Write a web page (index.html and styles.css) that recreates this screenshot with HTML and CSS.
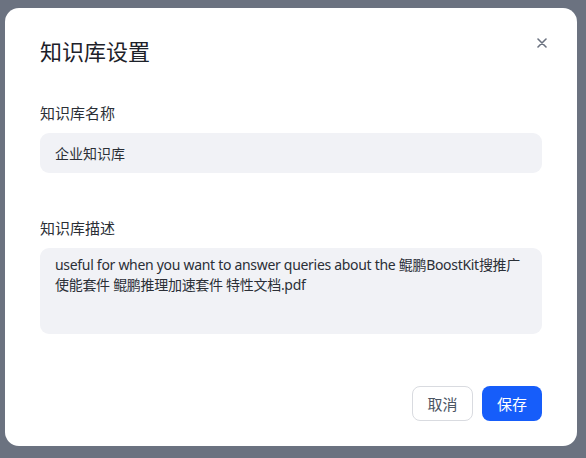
FILE: index.html
```html
<!DOCTYPE html>
<html lang="zh-CN">
<head>
<meta charset="utf-8">
<title>知识库设置</title>
<link rel="stylesheet" href="styles.css">
</head>
<body>
<div class="overlay">
  <div class="dialog">
    <h2 class="title">知识库设置</h2>
    <button class="close" aria-label="关闭">
      <svg width="10" height="10" viewBox="0 0 10 10"><path d="M1 1L9 9M9 1L1 9" stroke="#6b7280" stroke-width="1.6" stroke-linecap="round"/></svg>
    </button>
    <div class="field first">
      <label class="label">知识库名称</label>
      <input class="control input" type="text" value="企业知识库">
    </div>
    <div class="field second">
      <label class="label">知识库描述</label>
      <textarea class="control textarea">useful for when you want to answer queries about the 鲲鹏BoostKit搜推广使能套件 鲲鹏推理加速套件 特性文档.pdf</textarea>
    </div>
    <div class="footer">
      <button class="btn btn-cancel">取消</button>
      <button class="btn btn-primary">保存</button>
    </div>
  </div>
</div>
</body>
</html>
```

FILE: styles.css
```css
* { box-sizing: border-box; }
html, body { margin: 0; padding: 0; }
body {
  background: #6b7280;
  font-family: "Noto Sans", "Noto Sans CJK SC", sans-serif;
  color: #1f2329;
}
.overlay {
  width: 586px;
  height: 458px;
  padding: 8px 9px 12px 5px;
  display: flex;
}
.dialog {
  position: relative;
  width: 572px;
  height: 438px;
  background: #ffffff;
  border-radius: 14px;
  padding: 28px 35px 25px;
  display: flex;
  flex-direction: column;
}
.title {
  margin: 0;
  font-size: 22px;
  line-height: 30px;
  font-weight: 400;
  color: #1d2129;
}
.close {
  position: absolute;
  top: 25px;
  right: 25px;
  width: 20px;
  height: 20px;
  padding: 0;
  border: 0;
  background: transparent;
  display: flex;
  align-items: center;
  justify-content: center;
}
.field { display: flex; flex-direction: column; }
.field.first { margin-top: 36px; }
.field.second { margin-top: 44px; }
.label {
  font-size: 15px;
  line-height: 22px;
  color: #2b2f36;
  margin-bottom: 9px;
}
.control {
  width: 502px;
  border: 0;
  outline: none;
  background: #f1f2f6;
  border-radius: 9px;
  font-family: "Noto Sans", "Noto Sans CJK SC", sans-serif;
  font-size: 14px;
  color: #2b2f36;
  padding: 0 15px;
  margin: 0;
}
.input { height: 40px; }
.textarea {
  height: 86px;
  padding: 7px 15px;
  line-height: 20px;
  letter-spacing: -0.3px;
  resize: none;
  display: block;
}
.footer {
  margin-top: auto;
  display: flex;
  justify-content: flex-end;
  gap: 9px;
}
.btn {
  height: 35px;
  border-radius: 8px;
  font-family: "Noto Sans", "Noto Sans CJK SC", sans-serif;
  font-size: 15px;
  padding: 0;
}
.btn-cancel {
  width: 61px;
  background: #fff;
  border: 1px solid #d9dbe0;
  color: #4b5563;
}
.btn-primary {
  width: 60px;
  background: #165dfa;
  border: 0;
  color: #fff;
}
```
